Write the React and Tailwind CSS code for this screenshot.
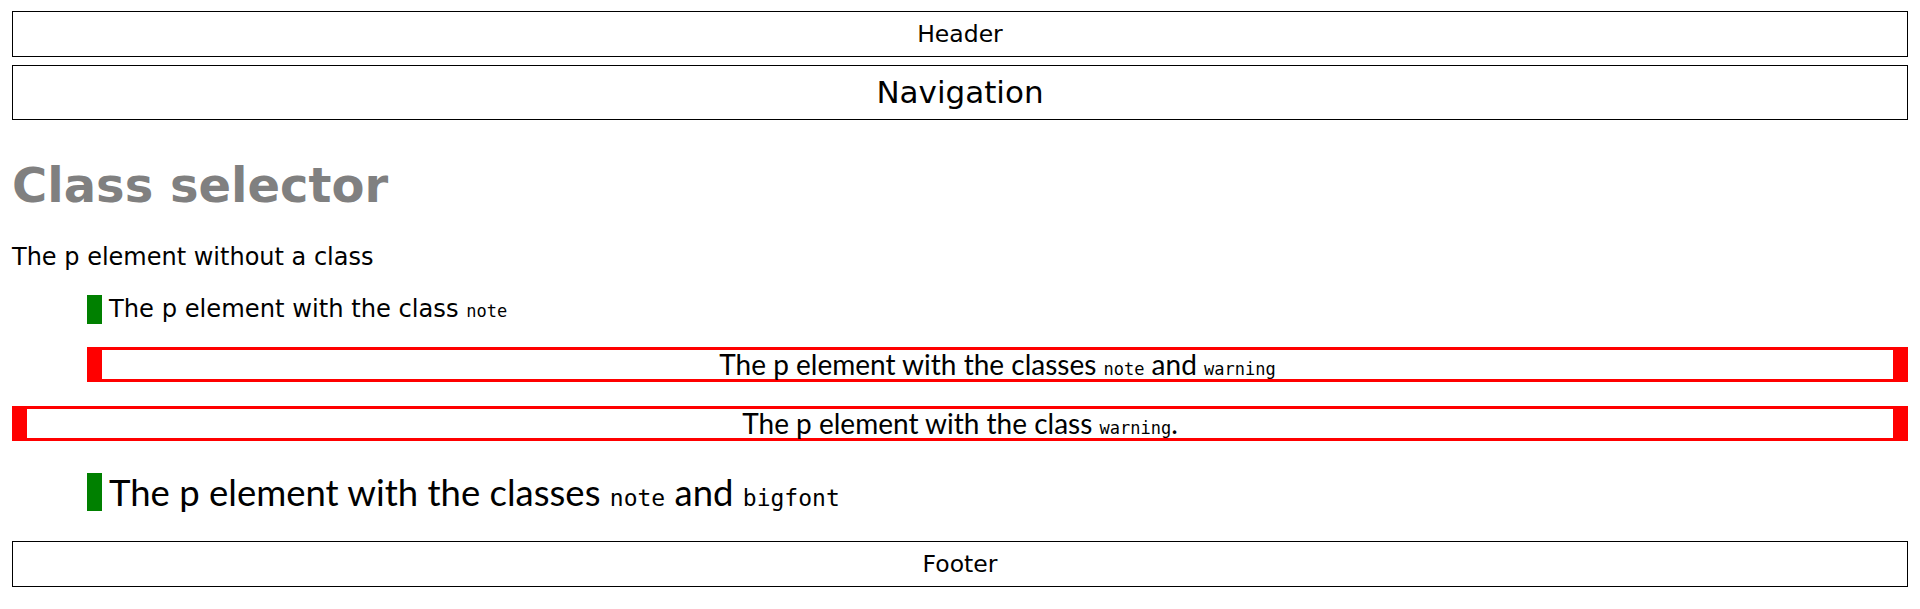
export default function App() {
  const sans = "font-['DejaVu_Sans',sans-serif]";
  const narrow = "font-['Lato','Liberation_Sans',sans-serif]";
  const mono = "font-['DejaVu_Sans_Mono',monospace] leading-none";

  return (
    <div className={`min-h-screen bg-white text-black px-[12px] pt-[11px] ${sans}`}>
      <header className="h-[46px] border border-black flex items-center justify-center text-[23.5px] pt-[2px]">
        Header
      </header>
      <nav className="mt-[8px] h-[55px] border border-black flex items-center justify-center text-[31px]">
        Navigation
      </nav>

      <main>
        <h1 className="mt-[41px] text-[48px] leading-none font-bold text-[#808080]">
          Class selector
        </h1>

        <p className="mt-[34px] text-[24px] leading-[29px]">The p element without a class</p>

        <p className="mt-[23px] ml-[75px] border-l-[15px] border-[#008000] pl-[7px] text-[24.2px] leading-[29px]">
          The p element with the class <code className={`${mono} text-[17px]`}>note</code>
        </p>

        <p
          className={`mt-[23px] ml-[75px] border-y-[3px] border-x-[15px] border-[#ff0000] text-center text-[28px] leading-[29px] ${narrow}`}
        >
          The p element with the classes <code className={`${mono} text-[17px]`}>note</code> and{" "}
          <code className={`${mono} text-[17px]`}>warning</code>
        </p>

        <p
          className={`mt-[24px] border-y-[3px] border-x-[15px] border-[#ff0000] text-center text-[28px] leading-[29px] ${narrow}`}
        >
          The p element with the class <code className={`${mono} text-[17px]`}>warning</code>.
        </p>

        <p className={`mt-[32px] ml-[75px] border-l-[15px] border-[#008000] pl-[7px] text-[36.5px] leading-[38px] ${narrow}`}>
          The p element with the classes <code className={`${mono} text-[23px]`}>note</code> and{" "}
          <code className={`${mono} text-[23px]`}>bigfont</code>
        </p>
      </main>

      <footer className="mt-[30px] h-[46px] border border-black flex items-center justify-center text-[23.5px] pt-[2px]">
        Footer
      </footer>
    </div>
  );
}
